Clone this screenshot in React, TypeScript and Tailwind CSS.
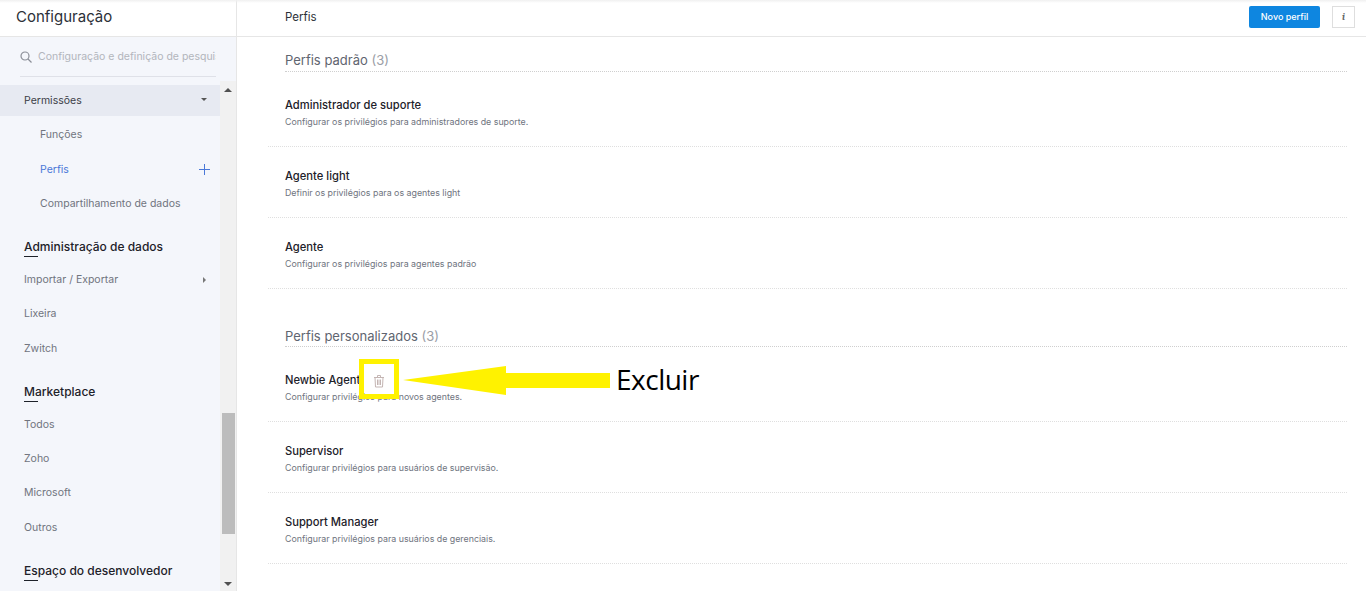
import React from "react";

const font = { fontFamily: "Inter, 'Noto Sans', sans-serif" };

function Item({ label, color = "text-[#70747e]", pl = "pl-6", pr = "pr-[13px]", right }: { label: string; color?: string; pl?: string; pr?: string; right?: React.ReactNode }) {
  return (
    <div className={`flex h-[34.4px] items-center justify-between ${pl} ${pr} text-[10.5px] ${color}`}>
      <span>{label}</span>
      {right}
    </div>
  );
}

function Heading({ label }: { label: string }) {
  return (
    <div className="mt-[7px] flex h-[34.5px] flex-col pt-[11px] pl-6">
      <span className="text-[12px] leading-[16px] font-medium text-[#1d2129]">{label}</span>
      <div className="mt-[1px] h-px w-[14px] bg-[#1d2129]" />
    </div>
  );
}

function Row({ title, desc, children }: { title: string; desc: string; children?: React.ReactNode }) {
  return (
    <div className="flex h-[71px] flex-col border-b border-dotted border-[#dfdfdf] pl-[17px] pt-[21px]">
      <div className="flex h-[17px] items-center text-[11.2px] font-medium text-[#1d2129]">{title}{children}</div>
      <div className="text-[8.83px] leading-[16px] text-[#6f7480]">{desc}</div>
    </div>
  );
}

function Section({ title, count, className = "" }: { title: string; count: string; className?: string }) {
  return (
    <div className={`ml-[17px] border-b border-dotted border-[#cfcfcf] text-[13px] leading-[20px] text-[#5f6570] ${className}`}>
      {title} <span className="text-[#9a9ea6]">{count}</span>
    </div>
  );
}

export default function App() {
  return (
    <div className="relative flex h-[591px] w-[1366px] overflow-hidden bg-white" style={font}>
      <aside className="flex w-[237px] shrink-0 flex-col border-r border-[#e6e6e6]">
        <div className="flex h-[37px] shrink-0 items-center border-b border-[#e6e6e6] pb-[2px] pl-4 text-[15px] text-[#2c3038]">Configuração</div>
        <div className="flex min-h-0 flex-1 flex-col bg-[#f4f6fb]">
          <div className="mx-5 mb-[4px] flex h-[40px] shrink-0 items-center gap-[6px] border-b border-[#dfe1e8] pt-[1px]">
            <svg className="shrink-0" width="12" height="12" viewBox="0 0 12 12" fill="none" stroke="#8b8f98" strokeWidth="1.2"><circle cx="5" cy="5" r="4" /><path d="M8 8l3.500 3.500" /></svg>
            <span className="overflow-hidden whitespace-nowrap text-[10.5px] text-[#b2b5bc]">Configuração e definição de pesquisa</span>
          </div>
          <div className="flex min-h-0 flex-1">
            <div className="min-w-0 flex-1 overflow-hidden pt-[4px]">
              <div className="mb-[2px] flex h-[31px] items-center justify-between bg-[#e7eaf2] pl-6 pr-[13px] text-[10.5px] text-[#3c4048]">
                <span>Permissões</span>
                <div className="mb-[2px] h-0 w-0 border-x-[3px] border-t-[3px] border-x-transparent border-t-[#555]" />
              </div>
              <Item label="Funções" pl="pl-10" />
              <Item label="Perfis" pl="pl-10" pr="pr-[10px]" color="text-[#4a78d8]" right={
                <svg width="11" height="11" viewBox="0 0 11 11" stroke="#4a78d8" strokeWidth="1"><path d="M5.500 0v11M0 5.500h11" /></svg>
              } />
              <Item label="Compartilhamento de dados" pl="pl-10" />
              <Heading label="Administração de dados" />
              <Item label="Importar / Exportar" pr="pr-[14px]" right={<div className="h-0 w-0 border-y-[3px] border-l-[3px] border-y-transparent border-l-[#777]" />} />
              <Item label="Lixeira" />
              <Item label="Zwitch" />
              <Heading label="Marketplace" />
              <Item label="Todos" />
              <Item label="Zoho" />
              <Item label="Microsoft" />
              <Item label="Outros" />
              <Heading label="Espaço do desenvolvedor" />
            </div>
            <div className="flex w-[16px] shrink-0 flex-col items-center bg-[#f1f1f1] pt-[7px]">
              <div className="h-0 w-0 border-x-[4px] border-b-[4px] border-x-transparent border-b-[#505050]" />
              <div className="mt-[321px] h-[121px] w-[13px] bg-[#bcbcbc]" />
              <div className="mt-[48px] h-0 w-0 border-x-[4px] border-t-[4px] border-x-transparent border-t-[#505050]" />
            </div>
          </div>
        </div>
      </aside>

      <main className="flex min-w-0 flex-1 flex-col">
        <header className="flex h-[37px] shrink-0 items-center justify-between border-b border-[#e6e6e6] pl-12 pr-[11px]">
          <span className="text-[11.5px] text-[#2c3038]">Perfis</span>
          <div className="mb-[2px] flex items-center gap-3">
            <button className="flex h-[22px] w-[71px] items-center justify-center rounded-[2px] bg-[#0e86e0] text-[9px] font-medium text-white">Novo perfil</button>
            <button className="flex h-[22px] w-[23px] items-center justify-center border border-[#dedede] font-serif text-[10px] font-bold italic text-[#666]">i</button>
          </div>
        </header>
        <div className="mr-[19px] ml-[31px]">
          <Section title="Perfis padrão" count="(3)" className="mt-[13px] mb-[4px] h-[22px]" />
          <Row title="Administrador de suporte" desc="Configurar os privilégios para administradores de suporte." />
          <Row title="Agente light" desc="Definir os privilégios para os agentes light" />
          <Row title="Agente" desc="Configurar os privilégios para agentes padrão" />
          <Section title="Perfis personalizados" count="(3)" className="mt-[37px] mb-[4px] h-[21px]" />
          <Row title="Newbie Agent" desc="Configurar privilégios para novos agentes.">
            <svg className="ml-[13px]" width="12" height="14" viewBox="0 0 12 14" fill="none" stroke="#c4b5b3" strokeWidth="1"><path d="M1 3.500h10M4.500 3.500V1.500h3v2M2 3.500l.5 9.500h7l.5-9.500M4.500 5.500v5.500M6 5.500v5.500M7.500 5.500v5.500" /></svg>
          </Row>
          <Row title="Supervisor" desc="Configurar privilégios para usuários de supervisão." />
          <Row title="Support Manager" desc="Configurar privilégios para usuários de gerenciais." />
        </div>
      </main>

      <div className="absolute inset-x-0 top-0 h-[3px] bg-gradient-to-b from-[#f0f0f0] to-transparent" />
      <div className="absolute left-[359px] top-[359px] h-[40px] w-[40px] border-[5px] border-[#fff200]" />
      <svg className="absolute left-[400px] top-[360px]" width="214" height="40" viewBox="0 0 214 40" fill="#fff200">
        <path d="M3 20L106 6V13H210V28H106V35Z" />
      </svg>
      <span className="absolute left-[616px] top-[359px] text-[28px] leading-[40px] tracking-[-0.5px] text-black" style={{ fontFamily: "'Open Sans', sans-serif" }}>Excluir</span>
    </div>
  );
}
